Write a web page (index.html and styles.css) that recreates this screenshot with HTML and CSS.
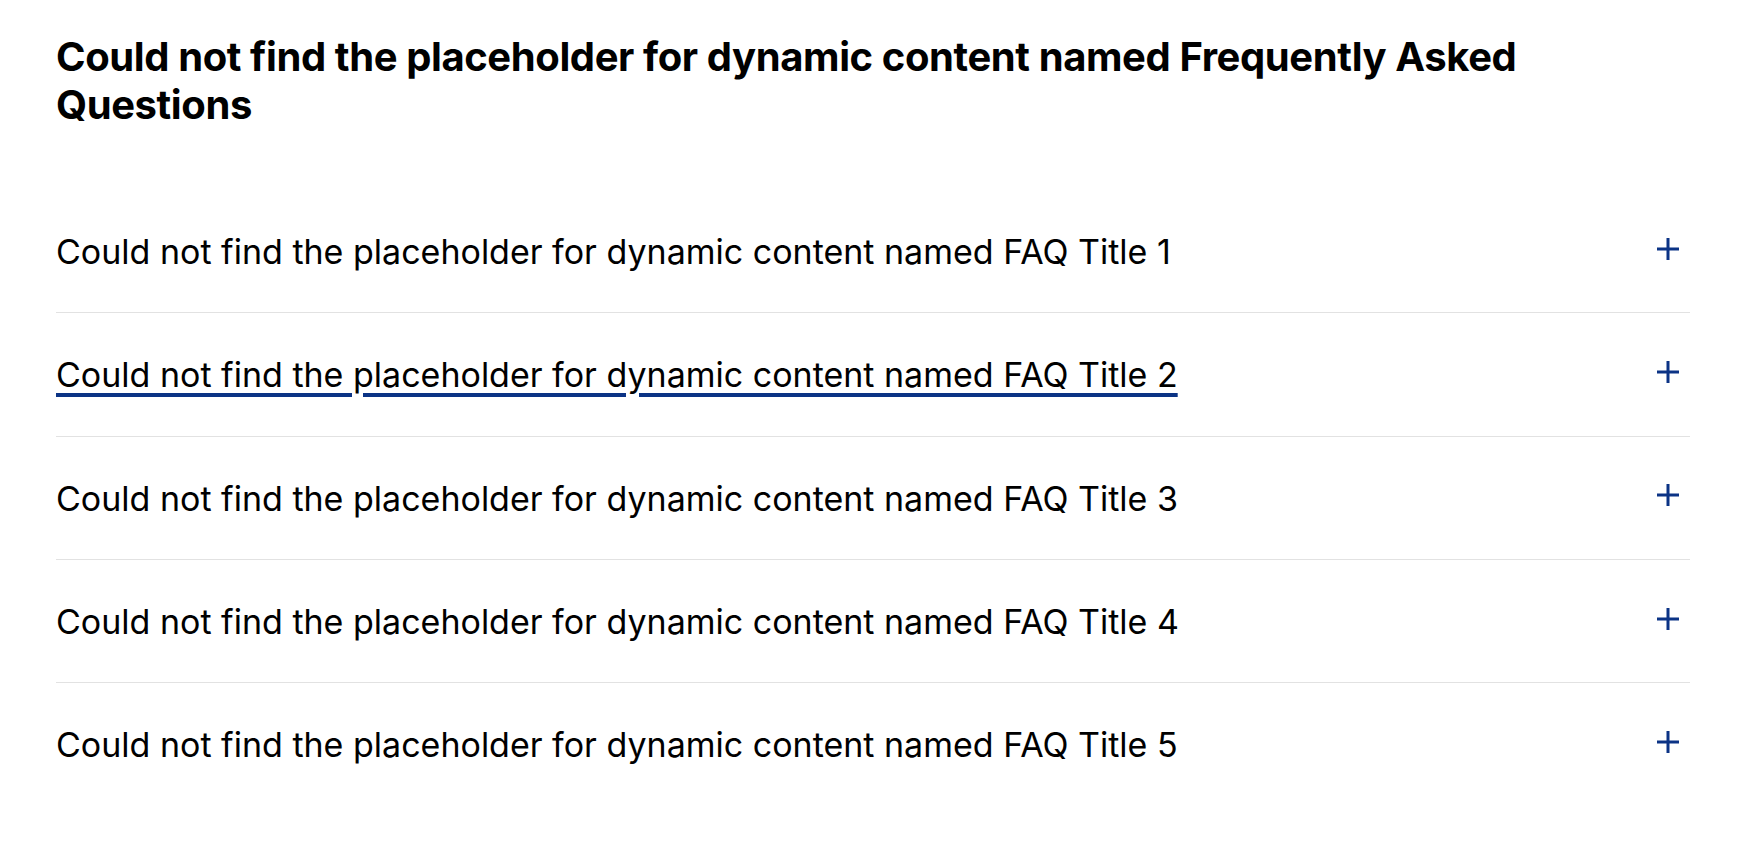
FILE: index.html
```html
<!DOCTYPE html>
<html lang="en">
<head>
  <meta charset="UTF-8" />
  <title>Frequently Asked Questions</title>
  <link rel="stylesheet" href="styles.css">
</head>
<body>
  <section class="faq">
    <h2 class="faq-title">Could not find the placeholder for dynamic content named Frequently Asked Questions</h2>
    <div class="faq-list">
      <div class="faq-item">
        <span class="faq-question">Could not find the placeholder for dynamic content named FAQ Title 1</span>
        <svg class="faq-icon" viewBox="0 0 24 24"><path d="M12 1v22M1 12h22" /></svg>
      </div>
      <div class="faq-item">
        <span class="faq-question is-hover">Could not find the placeholder for dynamic content named FAQ Title 2</span>
        <svg class="faq-icon" viewBox="0 0 24 24"><path d="M12 1v22M1 12h22" /></svg>
      </div>
      <div class="faq-item">
        <span class="faq-question">Could not find the placeholder for dynamic content named FAQ Title 3</span>
        <svg class="faq-icon" viewBox="0 0 24 24"><path d="M12 1v22M1 12h22" /></svg>
      </div>
      <div class="faq-item">
        <span class="faq-question">Could not find the placeholder for dynamic content named FAQ Title 4</span>
        <svg class="faq-icon" viewBox="0 0 24 24"><path d="M12 1v22M1 12h22" /></svg>
      </div>
      <div class="faq-item">
        <span class="faq-question">Could not find the placeholder for dynamic content named FAQ Title 5</span>
        <svg class="faq-icon" viewBox="0 0 24 24"><path d="M12 1v22M1 12h22" /></svg>
      </div>
    </div>
  </section>
</body>
</html>
```
FILE: styles.css
```css
:root {
  --text: #000;
  --accent: #0b3385;
  --divider: #e2e2e2;
}

body {
  margin: 0;
  font-family: Inter, 'Noto Sans', sans-serif;
  color: var(--text);
  background: #fff;
}

.faq {
  padding: 33px 56px 0;
}

.faq-title {
  margin: 0 0 61px;
  font-size: 40px;
  line-height: 48px;
  font-weight: 700;
  letter-spacing: -0.4px;
}

.faq-item {
  display: flex;
  align-items: center;
  justify-content: space-between;
  padding: 40px 0 39px;
  border-bottom: 1px solid var(--divider);
}

.faq-item:last-child {
  border-bottom: none;
}

.faq-question {
  font-size: 34px;
  line-height: 43.3px;
}

.faq-question.is-hover {
  text-decoration: underline;
  text-decoration-color: var(--accent);
  text-decoration-thickness: 3.5px;
  text-underline-offset: 6px;
}

.faq-icon {
  width: 24px;
  height: 24px;
  margin: 0 10px 6px 0;
  fill: none;
  stroke: var(--accent);
  stroke-width: 3;
}
```
